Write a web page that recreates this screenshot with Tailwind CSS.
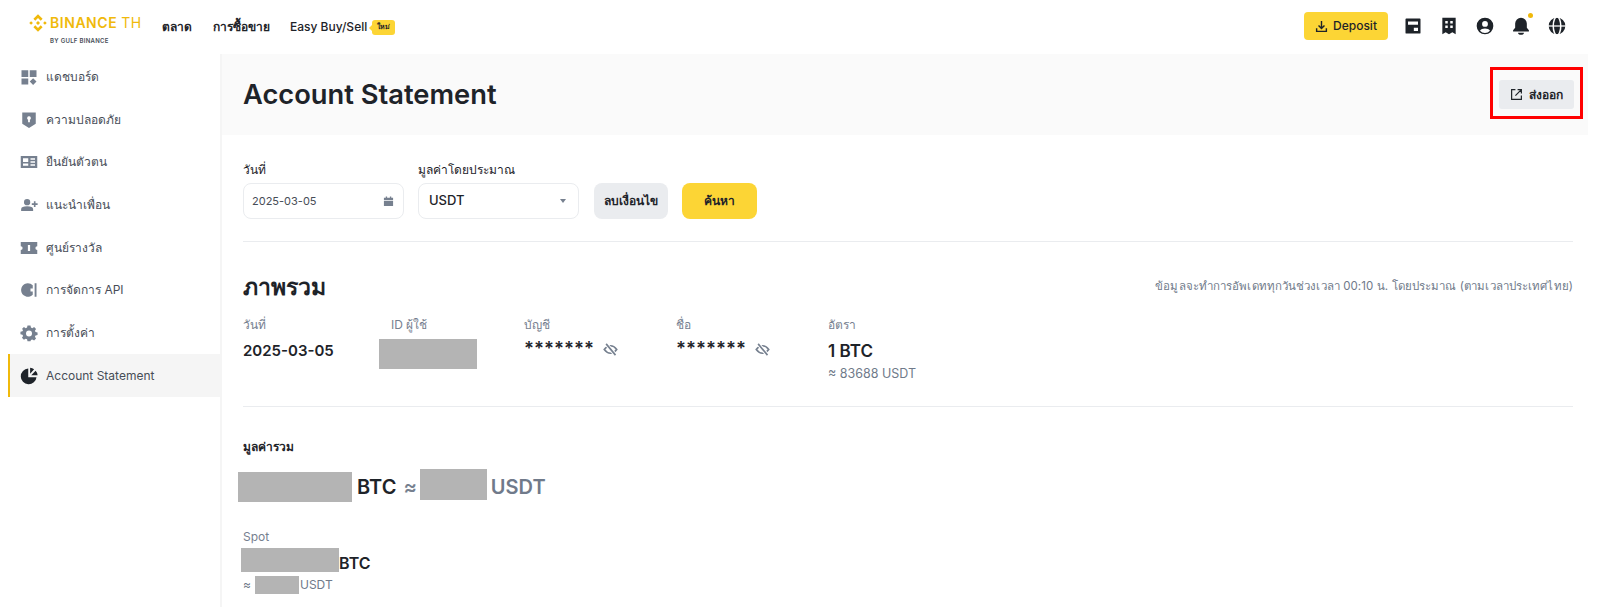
<!DOCTYPE html>
<html lang="th">
<head>
  <meta charset="UTF-8" />
  <title>Account Statement</title>
  <script src="https://cdn.jsdelivr.net/npm/@tailwindcss/browser@4"></script>
</head>
<body class="bg-white text-[#1e2329] font-['Inter','Noto_Sans','DejaVu_Sans',sans-serif] h-[607px] overflow-hidden">

  <!-- Header -->
  <header class="h-[54px] flex items-center pl-[28px] pr-[33px]">
    <div class="flex items-center w-[134px] shrink-0">
      <div class="relative w-[113px] h-[36px]">
        <svg class="absolute left-0 top-[4px]" width="20" height="20" viewBox="0 0 24 24" fill="#f0b90b">
          <path d="M12 1.5 17.5 7l-2.2 2.2L12 5.9 8.7 9.2 6.500 7zM3.700 9.800l2.200 2.200-2.200 2.200L1.500 12zM20.300 9.800l2.200 2.200-2.200 2.200-2.200-2.200zM12 18.100l3.300-3.300 2.200 2.200-5.500 5.500L6.500 17l2.200-2.200zM12 9.600l2.400 2.400-2.400 2.400L9.600 12z"/>
        </svg>
        <span class="absolute left-[22px] top-[3px] text-[14px] leading-[22px] font-semibold tracking-[0.55px] text-[#f0b90b] whitespace-nowrap">BINANCE <span class="font-normal">TH</span></span>
        <span class="absolute left-[22px] top-[27px] text-[6px] leading-[9px] font-semibold tracking-[0.3px] text-[#474d57] whitespace-nowrap">BY GULF BINANCE</span>
      </div>
    </div>
    <nav class="flex items-center text-[12px] font-medium text-[#1e2329]">
      <a class="w-[51px] font-bold">ตลาด</a>
      <a class="w-[77px] font-bold">การซื้อขาย</a>
      <a class="whitespace-nowrap">Easy Buy/Sell</a>
      <span class="relative ml-[5px] h-[15px] w-[23px] flex items-center justify-center rounded-[3px] bg-[#fcd535] text-[7px] font-bold">
        <span class="absolute -left-[3px] top-[5px] w-0 h-0 border-y-[3px] border-y-transparent border-r-[3px] border-r-[#fcd535]"></span>
        ใหม่
      </span>
    </nav>
    <div class="ml-auto mb-[2px] flex items-center">
      <button class="h-[28px] w-[84px] rounded-[4px] bg-[#fcd535] flex items-center justify-center gap-[5px] text-[12px] font-medium mr-[15px]">
        <svg width="13" height="13" viewBox="0 0 24 24" fill="none" stroke="#1e2329" stroke-width="2.600"><path d="M12 2v13M6.500 10 12 15.500 17.500 10M3 15v6h18v-6"/></svg>
        Deposit
      </button>
      <div class="flex items-center gap-[16px]">
        <svg width="20" height="20" viewBox="0 0 24 24" fill="#1e2329"><path fill-rule="evenodd" d="M3 4a1 1 0 0 1 1-1h16a1 1 0 0 1 1 1v16a1 1 0 0 1-1 1H4a1 1 0 0 1-1-1zm3 2.500v4h12v-4zM13 14v4h5v-4z"/></svg>
        <svg width="20" height="20" viewBox="0 0 24 24" fill="#1e2329"><path fill-rule="evenodd" d="M4 2h16v20l-4-2.500-4 2.500-4-2.500L4 22zm3.500 4v3h3V6zm6 0v3h3V6zm-6 5.500v3h3v-3zm6 0v3h3v-3z"/></svg>
        <svg width="20" height="20" viewBox="0 0 24 24" fill="#1e2329"><path fill-rule="evenodd" d="M12 2a10 10 0 1 1 0 20 10 10 0 0 1 0-20zm0 4a3.500 3.500 0 1 0 0 7 3.500 3.500 0 0 0 0-7zm0 9c-2.700 0-5 1-6 2.700a8 8 0 0 0 12 0C17 16 14.700 15 12 15z"/></svg>
        <div class="relative">
          <svg width="20" height="20" viewBox="0 0 24 24" fill="#1e2329"><path d="M12 2a7 7 0 0 0-7 7v5l-2.500 3v1.500h19V17L19 14V9a7 7 0 0 0-7-7zM8.500 20a3.500 2.500 0 0 0 7 0z"/></svg>
          <span class="absolute -top-[3px] right-[-2px] w-[5px] h-[5px] rounded-full bg-[#f0b90b]"></span>
        </div>
        <svg width="20" height="20" viewBox="0 0 24 24" fill="#1e2329"><circle cx="12" cy="12" r="10"/><ellipse cx="12" cy="12" rx="4.500" ry="11" fill="none" stroke="#fff" stroke-width="1.800"/><path d="M1 12h22" stroke="#fff" stroke-width="1.500"/></svg>
      </div>
    </div>
  </header>

  <div class="flex h-[553px]">
    <!-- Sidebar -->
    <aside class="w-[222px] shrink-0 pt-[2px] border-r-2 border-[#f5f5f5] text-[12px] text-[#474d57]">
      <a class="h-[42.6px] flex items-center gap-[8px] pl-[20px]">
        <svg width="18" height="18" viewBox="0 0 24 24" fill="#76808f"><path d="M2 3h9v9H2zM13 3h9v9h-9zM2 14h9v8H2zM17.500 13.500 22 18l-4.500 4.500L13 18z"/></svg>
        แดชบอร์ด
      </a>
      <a class="h-[42.6px] flex items-center gap-[8px] pl-[20px]">
        <svg width="18" height="18" viewBox="0 0 24 24" fill="#76808f"><path fill-rule="evenodd" d="M3 2h18v15l-9 5.500L3 17zm9 5a2.500 2.500 0 0 0-1.200 4.700V15h2.400v-3.300A2.500 2.500 0 0 0 12 7z"/></svg>
        ความปลอดภัย
      </a>
      <a class="h-[42.6px] flex items-center gap-[8px] pl-[20px]">
        <svg width="18" height="18" viewBox="0 0 24 24" fill="#76808f"><path fill-rule="evenodd" d="M1 4h22v16H1zm3 3v5h7V7zm10 0v2h6V7zm0 4v2h6v-2zM4 14v3h7v-3zm10 1v2h6v-2z"/></svg>
        ยืนยันตัวตน
      </a>
      <a class="h-[42.6px] flex items-center gap-[8px] pl-[20px]">
        <svg width="18" height="18" viewBox="0 0 24 24" fill="#76808f"><path d="M9.500 4a4.200 4.200 0 1 1 0 8.400 4.200 4.200 0 0 1 0-8.400zM1.500 20v-2.500c0-2.500 3-3.800 8-3.800s8 1.300 8 3.800V20zM18.500 7h2.200v2.800h2.800V12h-2.800v2.800h-2.200V12h-2.800V9.800h2.800z"/></svg>
        แนะนำเพื่อน
      </a>
      <a class="h-[42.6px] flex items-center gap-[8px] pl-[20px]">
        <svg width="18" height="18" viewBox="0 0 24 24" fill="#76808f"><path fill-rule="evenodd" d="M1 4h22v5.500a2.500 2.500 0 0 0 0 5V20H1v-5.500a2.500 2.500 0 0 0 0-5zm9.500 4v8h3V8z"/></svg>
        ศูนย์รางวัล
      </a>
      <a class="h-[42.6px] flex items-center gap-[8px] pl-[20px]">
        <svg width="18" height="18" viewBox="0 0 24 24" fill="#76808f"><path d="M10.500 3a9 9 0 1 0 6.500 15.200V14h-3v-4h3V5.800A9 9 0 0 0 10.500 3zM19.500 3h2.500v18h-2.500z"/></svg>
        การจัดการ API
      </a>
      <a class="h-[42.6px] flex items-center gap-[8px] pl-[20px]">
        <svg width="18" height="18" viewBox="0 0 24 24" fill="#76808f"><path fill-rule="evenodd" d="M10 2h4l.6 2.700 1.800.8 2.400-1.500 2.600 2.600-1.500 2.400.8 1.800 2.700.6v3.200l-2.700.6-.8 1.800 1.500 2.400-2.600 2.600-2.400-1.500-1.800.8L14 23h-4l-.6-2.700-1.800-.8-2.400 1.500-2.600-2.600 1.500-2.400-.8-1.800-2.700-.6v-3.200l2.700-.6.8-1.800L2.600 6.600l2.600-2.600 2.400 1.500 1.800-.8zM12 8.500a4 4 0 1 0 0 8 4 4 0 0 0 0-8z"/></svg>
        การตั้งค่า
      </a>
      <a class="h-[43px] ml-[8px] flex items-center gap-[8px] pl-[10px] border-l-2 border-[#f0b90b] bg-[#f5f5f5]">
        <svg width="18" height="18" viewBox="0 0 24 24" fill="#1e2329"><path d="M11 2A10.500 10.500 0 1 0 22 13.500H11zM13.500 1v8l5.300-6a10 10 0 0 0-5.300-2zM15 11h8.500a10 10 0 0 0-2.700-6z"/></svg>
        Account Statement
      </a>
    </aside>

    <!-- Main -->
    <main class="flex-1 pr-[12px]">
      <div class="relative h-[81px] bg-[#fafafa] flex items-center justify-between pl-[21px] pr-[14px]">
        <h1 class="text-[27.3px] font-semibold mt-[1px]">Account Statement</h1>
        <button class="h-[29px] w-[75px] rounded-[3px] bg-[#eaecef] flex items-center justify-center gap-[6px] text-[12px] font-semibold">
          <svg width="13" height="13" viewBox="0 0 24 24" fill="none" stroke="#1e2329" stroke-width="2.200"><path d="M10 3H3v18h18v-7M14 3h7v7M21 3 10 14"/></svg>
          ส่งออก
        </button>
        <!-- highlight box -->
        <div class="absolute left-[1268px] top-[13px] w-[93px] h-[52px] border-[3px] border-[#f00]"></div>
      </div>

      <div class="pl-[21px] pr-[15px]">
        <!-- Filters -->
        <section class="pt-[25px] pb-[22px] border-b border-[#eaecef] flex items-end gap-[14px]">
          <div>
            <label class="block text-[12px] leading-[20px] mb-[3px]">วันที่</label>
            <div class="w-[161px] h-[36px] rounded-[8px] border border-[#eaecef] flex items-center justify-between pl-[8px] pr-[9px] text-[11px] text-[#474d57]">
              2025-03-05
              <svg width="11" height="11" viewBox="0 0 24 24" fill="#76808f"><path d="M2 4h4V1h3v3h6V1h3v3h4v5H2zM2 11h20v11H2z"/></svg>
            </div>
          </div>
          <div>
            <label class="block text-[12px] leading-[20px] mb-[3px]">มูลค่าโดยประมาณ</label>
            <div class="w-[161px] h-[36px] rounded-[8px] border border-[#eaecef] flex items-center justify-between pl-[10px] pr-[12px] text-[13px] font-medium">
              USDT
              <span class="w-0 h-0 border-x-[3px] border-x-transparent border-t-[4px] border-t-[#76808f]"></span>
            </div>
          </div>
          <button class="ml-[1px] w-[74px] h-[36px] rounded-[8px] bg-[#eaecef] text-[12px] font-semibold">ลบเงื่อนไข</button>
          <button class="w-[75px] h-[36px] rounded-[8px] bg-[#fcd535] text-[12px] font-semibold">ค้นหา</button>
        </section>

        <!-- Overview -->
        <section class="pt-[29px] pb-[22px] border-b border-[#eaecef]">
          <div class="flex items-center justify-between h-[32px]">
            <h2 class="text-[23px] leading-[32px] font-bold">ภาพรวม</h2>
            <p class="text-[11.5px] tracking-[0.1px] text-[#707a8a]">ข้อมูลจะทำการอัพเดททุกวันช่วงเวลา 00:10 น. โดยประมาณ (ตามเวลาประเทศไทย)</p>
          </div>
          <div class="mt-[12px] flex">
            <div class="w-[148px]">
              <div class="text-[12px] leading-[20px] text-[#76808f]">วันที่</div>
              <div class="mt-[4px] text-[15px] leading-[24px] font-semibold">2025-03-05</div>
            </div>
            <div class="w-[133px]">
              <div class="text-[12px] leading-[20px] text-[#76808f]">ID ผู้ใช้</div>
              <div class="mt-[4px] -ml-[12px] w-[98px] h-[30px] bg-[#b4b4b4]"></div>
            </div>
            <div class="w-[152px]">
              <div class="text-[12px] leading-[20px] text-[#76808f]">บัญชี</div>
              <div class="mt-[4px] flex items-center gap-[9px] h-[20px]">
                <span class="text-[18.5px] font-semibold">*******</span>
                <svg width="15" height="15" viewBox="0 0 24 24" fill="none" stroke="#76808f" stroke-width="2.600"><path d="M2 12c3-4 6-6 10-6s7 2 10 6c-3 4-6 6-10 6s-7-2-10-6z"/><path d="M5 3l15 18" stroke="#fff" stroke-width="6"/><path d="M5 3l15 18"/></svg>
              </div>
            </div>
            <div class="w-[152px]">
              <div class="text-[12px] leading-[20px] text-[#76808f]">ชื่อ</div>
              <div class="mt-[4px] flex items-center gap-[9px] h-[20px]">
                <span class="text-[18.5px] font-semibold">*******</span>
                <svg width="15" height="15" viewBox="0 0 24 24" fill="none" stroke="#76808f" stroke-width="2.600"><path d="M2 12c3-4 6-6 10-6s7 2 10 6c-3 4-6 6-10 6s-7-2-10-6z"/><path d="M5 3l15 18" stroke="#fff" stroke-width="6"/><path d="M5 3l15 18"/></svg>
              </div>
            </div>
            <div>
              <div class="text-[12px] leading-[20px] text-[#76808f]">อัตรา</div>
              <div class="mt-[4px] text-[17px] leading-[24px] font-semibold">1 BTC</div>
              <div class="mt-[1px] text-[12.5px] leading-[20px] text-[#707a8a]">≈ 83688 USDT</div>
            </div>
          </div>
        </section>

        <!-- Total value -->
        <section class="pt-[30px]">
          <div class="text-[12px] leading-[20px] font-bold">มูลค่ารวม</div>
          <div class="mt-[13px] h-[34px] -ml-[5px] flex items-center text-[20px] font-semibold">
            <span class="w-[114px] h-[30px] bg-[#b4b4b4]"></span>
            <span class="ml-[5px]">BTC</span>
            <span class="ml-[7px] text-[#76808f]">≈</span>
            <span class="ml-[3px] mb-[5px] w-[67px] h-[31px] bg-[#b4b4b4]"></span>
            <span class="ml-[4px] text-[#707a8a]">USDT</span>
          </div>
          <div class="mt-[23px] text-[12px] leading-[20px] text-[#76808f]">Spot</div>
          <div class="mt-[1px] h-[24px] -ml-[2px] flex items-center text-[16px] font-semibold">
            <span class="w-[98px] h-[24px] bg-[#b4b4b4]"></span>
            <span class="mt-[5px]">BTC</span>
          </div>
          <div class="mt-[4px] h-[18px] flex items-center text-[12px] text-[#707a8a]">
            ≈
            <span class="ml-[4px] w-[44px] h-[18px] bg-[#b4b4b4]"></span>
            <span class="ml-[1px]">USDT</span>
          </div>
        </section>
      </div>
    </main>
  </div>
</body>
</html>
